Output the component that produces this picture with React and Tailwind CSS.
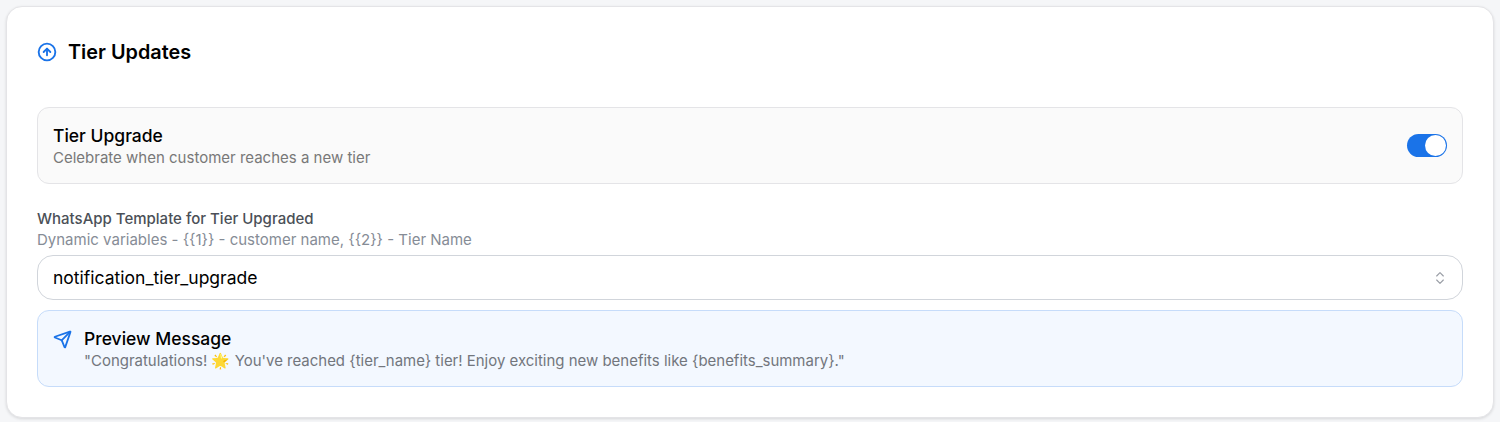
import { ArrowUpCircle, ChevronsUpDown, Send } from "lucide-react";

export default function App() {
  return (
    <div className="min-h-[422px] bg-[#f5f6f8] p-1.5 font-['Inter',sans-serif] text-black">
      <div className="rounded-2xl border border-[#e4e4e7] bg-white px-[30px] pt-[30px] pb-[30px] shadow-[0_1px_3px_rgba(0,0,0,0.12)]">
        <div className="flex items-center gap-[11px] h-[30px]">
          <ArrowUpCircle className="size-5 text-[#1a73e8]" strokeWidth={2.25} />
          <h2 className="text-[19.85px] font-semibold leading-7">Tier Updates</h2>
        </div>
        <div className="mt-10 flex h-[77px] items-center justify-between rounded-xl border border-[#e4e4e7] bg-[#fafafa] px-[15px]">
          <div>
            <div className="text-[17.5px] font-[450] leading-6">Tier Upgrade</div>
            <div className="text-[15px] leading-5 text-[#787878]">Celebrate when customer reaches a new tier</div>
          </div>
          <div className="flex h-[23px] w-10 items-center justify-end rounded-full bg-[#1a73e8] p-px">
            <div className="size-[21px] rounded-full bg-white" />
          </div>
        </div>
        <div className="mt-[24px]">
          <div className="text-[15px] font-medium leading-[22px] text-[#4b5057]">WhatsApp Template for Tier Upgraded</div>
          <div className="text-[15px] leading-5 text-[#868c96]">Dynamic variables - {"{{1}}"} - customer name, {"{{2}}"} - Tier Name</div>
        </div>
        <div className="mt-[5px] flex h-[45px] items-center justify-between rounded-2xl border border-[#d1d5db] bg-white pr-[14px] pl-[15px]">
          <span className="pt-px text-[17.55px]">notification_tier_upgrade</span>
          <ChevronsUpDown className="size-4 text-[#9a9ea6]" strokeWidth={1.75} />
        </div>
        <div className="mt-2.5 flex h-[77px] items-start gap-3 rounded-xl border border-[#c6dcfa] bg-[#f3f8ff] px-[15px] pt-[17px]">
          <Send className="mt-0.5 size-[19px] text-[#1a73e8]" strokeWidth={2.25} />
          <div className="-mt-[1px]">
            <div className="text-[17.5px] font-[450] leading-6">Preview Message</div>
            <div className="text-[14.98px] leading-5 text-[#72767d]">"Congratulations! 🌟 You've reached {"{tier_name}"} tier! Enjoy exciting new benefits like {"{benefits_summary}"}."</div>
          </div>
        </div>
      </div>
    </div>
  );
}
